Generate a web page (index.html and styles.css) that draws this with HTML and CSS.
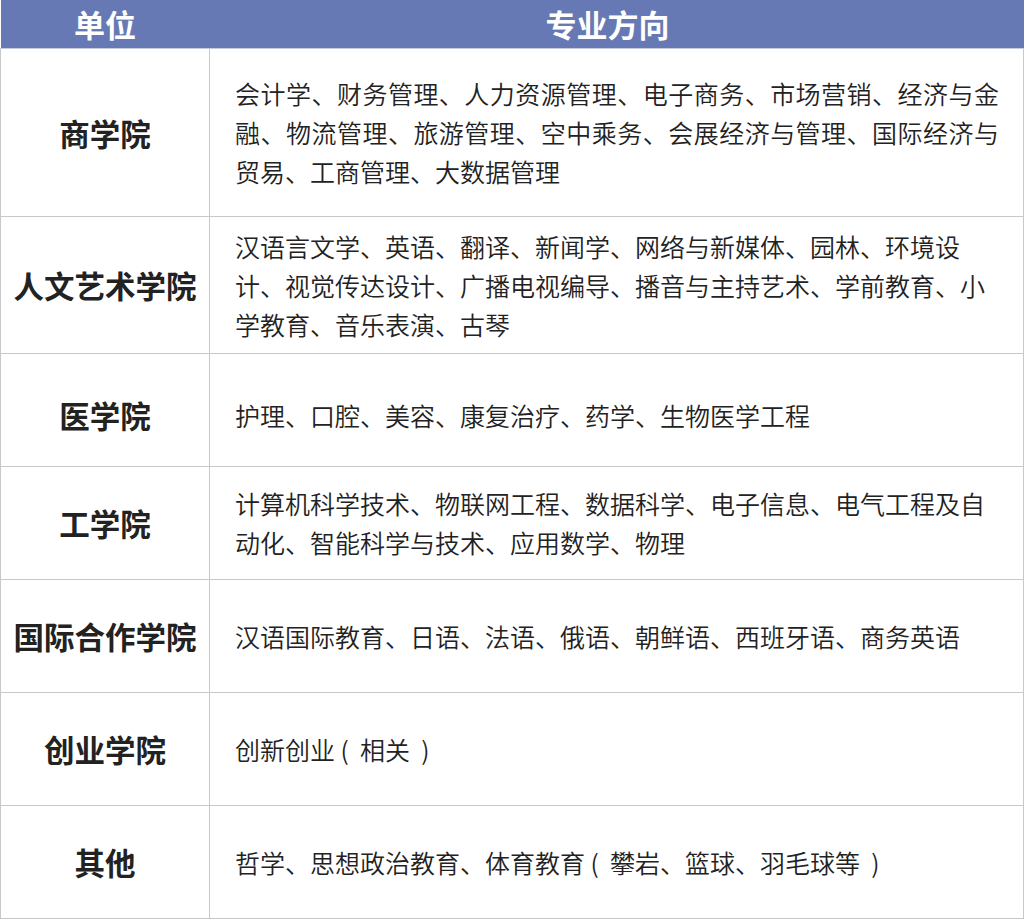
FILE: index.html
```html
<!DOCTYPE html>
<html lang="zh-CN">
<head>
<meta charset="utf-8">
<title>专业方向</title>
<link rel="stylesheet" href="styles.css">
</head>
<body>
<table class="majors">
  <colgroup>
    <col class="c-unit">
    <col class="c-dir">
  </colgroup>
  <thead>
    <tr class="head-row">
      <th class="h-unit">单位</th>
      <th class="h-dir">专业方向</th>
    </tr>
  </thead>
  <tbody>
    <tr class="r-tall">
      <td class="unit">商学院</td>
      <td class="dir justify">会计学、财务管理、人力资源管理、电子商务、市场营销、经济与金融、物流管理、旅游管理、空中乘务、会展经济与管理、国际经济与贸易、工商管理、大数据管理</td>
    </tr>
    <tr class="r-mid">
      <td class="unit">人文艺术学院</td>
      <td class="dir">汉语言文学、英语、翻译、新闻学、网络与新媒体、园林、环境设计、视觉传达设计、广播电视编导、播音与主持艺术、学前教育、小学教育、音乐表演、古琴</td>
    </tr>
    <tr class="r-low">
      <td class="unit">医学院</td>
      <td class="dir">护理、口腔、美容、康复治疗、药学、生物医学工程</td>
    </tr>
    <tr class="r-std">
      <td class="unit">工学院</td>
      <td class="dir">计算机科学技术、物联网工程、数据科学、电子信息、电气工程及自动化、智能科学与技术、应用数学、物理</td>
    </tr>
    <tr class="r-std">
      <td class="unit">国际合作学院</td>
      <td class="dir">汉语国际教育、日语、法语、俄语、朝鲜语、西班牙语、商务英语</td>
    </tr>
    <tr class="r-std">
      <td class="unit">创业学院</td>
      <td class="dir">创新创业 (&nbsp; 相关 &nbsp;)</td>
    </tr>
    <tr class="r-std">
      <td class="unit">其他</td>
      <td class="dir">哲学、思想政治教育、体育教育 (&nbsp; 攀岩、篮球、羽毛球等 &nbsp;)</td>
    </tr>
  </tbody>
</table>
</body>
</html>
```

FILE: styles.css
```css
html, body {
  margin: 0;
  padding: 0;
  background: #ffffff;
}

body {
  font-family: "Noto Sans CJK SC", "Noto Sans", sans-serif;
  color: #222222;
}

.majors {
  border-collapse: collapse;
  table-layout: fixed;
  width: 1023px;
}

.c-unit { width: 209px; }
.c-dir { width: 814px; }

.head-row th {
  background: #6779b4;
  color: #ffffff;
  font-weight: 700;
  font-size: 31px;
  line-height: 48px;
  height: 48px;
  padding: 0;
  text-align: center;
  border: none;
  border-bottom: 1px solid #c6cbdc;
}

.h-dir {
  padding-right: 18px !important;
}

.majors td {
  border: 1px solid #c8c8c8;
  vertical-align: middle;
}

.unit {
  text-align: center;
  font-weight: 700;
  font-size: 30.5px;
  padding: 0;
}

.dir {
  font-size: 25px;
  font-weight: 350;
  line-height: 39px;
  padding: 0 24px 0 25px;
  text-align: left;
}

.justify {
  text-align: justify;
}

.r-tall td { height: 167px; }
.r-mid td { height: 136px; }
.r-std td { height: 112px; }
.r-low td { height: 102px; padding-top: 10px; }
```
